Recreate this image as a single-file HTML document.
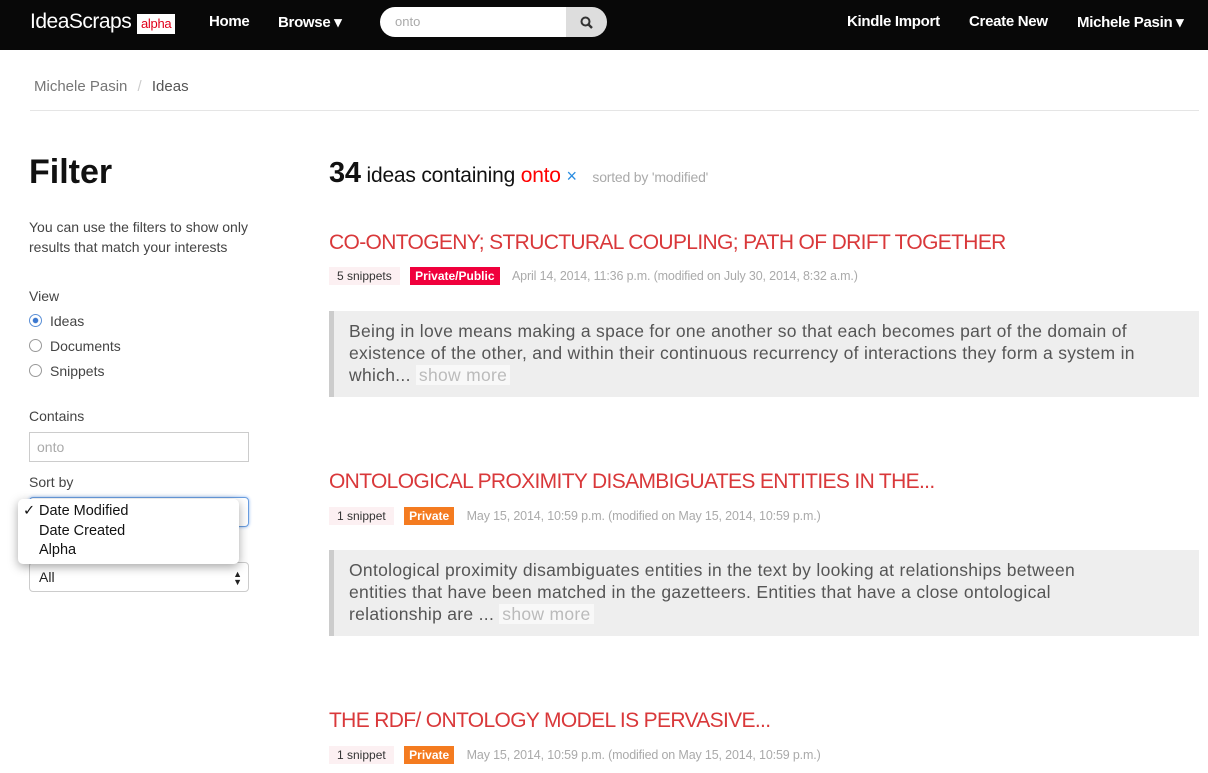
<!DOCTYPE html>
<html><head><style>
body{margin:0;width:1208px;height:773px;overflow:hidden;background:#fff;font-family:"Liberation Sans",sans-serif;color:#333;position:relative}
.nav{position:absolute;left:0;top:0;width:1208px;height:50px;background:#080808;color:#fff}
.nav span{position:absolute;top:13px;font-size:15px;font-weight:bold;letter-spacing:-0.3px}
.abs{position:absolute;white-space:nowrap}
.title{color:#d9383a;font-size:21px;letter-spacing:-0.65px}
.cnt{background:#fcf0f2;color:#333;font-size:12px;padding:2px 8px}
.tag{color:#fff;font-size:12px;font-weight:bold;padding:2px 5px}
.date{color:#aaa;font-size:12.5px;letter-spacing:-0.15px}
.quote{position:absolute;left:329px;width:870px;background:#eee;border-left:5px solid #ccc;box-sizing:border-box;padding:9px 15px;font-size:17.5px;line-height:22px;color:#555;letter-spacing:0.3px;white-space:nowrap}
.more{background:#f8f8f8;color:#bbb;padding:0 3px}
.radio{display:inline-block;width:11px;height:11px;border:1px solid #999;border-radius:50%;margin-right:8px;vertical-align:-1px;background:#fff}
</style></head><body>
<div class="nav">
<span style="left:30px;top:10px;font-size:21px;font-weight:normal;letter-spacing:-0.5px">IdeaScraps</span>
<span style="left:137px;top:14px;background:#fff;color:#e0001a;font-size:13px;font-weight:normal;padding:0 4px;height:20px;line-height:20px">alpha</span>
<span style="left:209px">Home</span>
<span style="left:278px">Browse ▾</span>
<div class="abs" style="left:380px;top:7px;width:186px;height:30px;background:#fff;border-radius:15px 0 0 15px;color:#aaa;font-size:13px;line-height:30px;padding-left:15px;box-sizing:border-box">onto</div>
<div class="abs" style="left:566px;top:7px;width:41px;height:30px;background:#ddd;border-radius:0 15px 15px 0;color:#333;text-align:center;line-height:30px;font-size:14px">
<svg width="13" height="13" viewBox="0 0 13 13" style="vertical-align:-2px"><circle cx="5.5" cy="5.5" r="4" stroke="#333" stroke-width="2" fill="none"/><path d="M8.5 8.5L12 12" stroke="#333" stroke-width="2.4"/></svg></div>
<span style="left:847px">Kindle Import</span>
<span style="left:969px">Create New</span>
<span style="left:1077px">Michele Pasin ▾</span>
</div>
<div class="abs" style="left:34px;top:78px;font-size:15px;color:#777">Michele Pasin <span style="color:#ccc;margin:0 6px">/</span> <span style="color:#555">Ideas</span></div>
<div class="abs" style="left:30px;top:110px;width:1169px;border-top:1px solid #e5e5e5"></div>

<div class="abs" style="left:29px;top:153px;font-size:34px;font-weight:bold;color:#111">Filter</div>
<div class="abs" style="left:29px;top:217px;font-size:14px;line-height:20px;color:#444">You can use the filters to show only<br>results that match your interests</div>
<div class="abs" style="left:29px;top:288px;font-size:14px;color:#444">View</div>
<div class="abs" style="left:29px;top:309px;font-size:14px;color:#444;line-height:25px"><span class="radio" style="border-color:#5b8fd6;background:radial-gradient(circle,#3b78d0 30%,#fff 40%)"></span>Ideas<br><span class="radio"></span>Documents<br><span class="radio"></span>Snippets</div>
<div class="abs" style="left:29px;top:408px;font-size:14px;color:#444">Contains</div>
<div class="abs" style="left:29px;top:432px;width:220px;height:30px;border:1px solid #ccc;box-sizing:border-box;color:#aaa;font-size:14px;line-height:28px;padding-left:7px">onto</div>
<div class="abs" style="left:29px;top:474px;font-size:14px;color:#444">Sort by</div>
<div class="abs" style="left:29px;top:497px;width:220px;height:30px;border:1px solid #6a9ee0;box-shadow:0 0 3px #8ab4f0;border-radius:4px;box-sizing:border-box"></div>
<div class="abs" style="left:29px;top:562px;width:220px;height:30px;border:1px solid #ccc;border-radius:4px;box-sizing:border-box;font-size:14px;line-height:28px;padding-left:9px;color:#222">All<span style="position:absolute;right:6px;font-size:9px;line-height:8px;top:7px">▲<br>▼</span></div>
<div class="abs" style="left:18px;top:499px;width:221px;height:65px;background:#fff;border-radius:5px;box-shadow:0 3px 10px rgba(0,0,0,.35);font-size:14.5px;color:#111;line-height:19.5px;padding-top:3px;box-sizing:border-box"><span style="position:absolute;left:5px">✓</span><div style="padding-left:21px">Date Modified<br>Date Created<br>Alpha</div></div>

<div class="abs" style="left:329px;top:157px;font-size:21px;color:#111;letter-spacing:-0.2px"><b style="font-size:29px">34</b> ideas containing <span style="color:#f00">onto</span> <span style="color:#2a8ce0;font-size:18px">×</span> <span style="font-size:14px;color:#aaa;margin-left:10px">sorted by 'modified'</span></div>

<div class="abs title" style="left:329px;top:231px">CO-ONTOGENY; STRUCTURAL COUPLING; PATH OF DRIFT TOGETHER</div>
<div class="abs" style="left:329px;top:267px"><span class="cnt">5 snippets</span> <span class="tag" style="background:#f0003c;margin-left:6px">Private/Public</span> <span class="date" style="margin-left:8px">April 14, 2014, 11:36 p.m. (modified on July 30, 2014, 8:32 a.m.)</span></div>
<div class="quote" style="top:311px;height:86px">Being in love means making a space for one another so that each becomes part of the domain of<br>existence of the other, and within their continuous recurrency of interactions they form a system in<br>which... <span class="more">show more</span></div>

<div class="abs title" style="left:329px;top:470px">ONTOLOGICAL PROXIMITY DISAMBIGUATES ENTITIES IN THE...</div>
<div class="abs" style="left:329px;top:507px"><span class="cnt">1 snippet</span> <span class="tag" style="background:#f47b20;margin-left:6px">Private</span> <span class="date" style="margin-left:8px">May 15, 2014, 10:59 p.m. (modified on May 15, 2014, 10:59 p.m.)</span></div>
<div class="quote" style="top:550px;height:86px">Ontological proximity disambiguates entities in the text by looking at relationships between<br>entities that have been matched in the gazetteers. Entities that have a close ontological<br>relationship are ... <span class="more">show more</span></div>

<div class="abs title" style="left:329px;top:709px">THE RDF/ ONTOLOGY MODEL IS PERVASIVE...</div>
<div class="abs" style="left:329px;top:746px"><span class="cnt">1 snippet</span> <span class="tag" style="background:#f47b20;margin-left:6px">Private</span> <span class="date" style="margin-left:8px">May 15, 2014, 10:59 p.m. (modified on May 15, 2014, 10:59 p.m.)</span></div>
</body></html>
